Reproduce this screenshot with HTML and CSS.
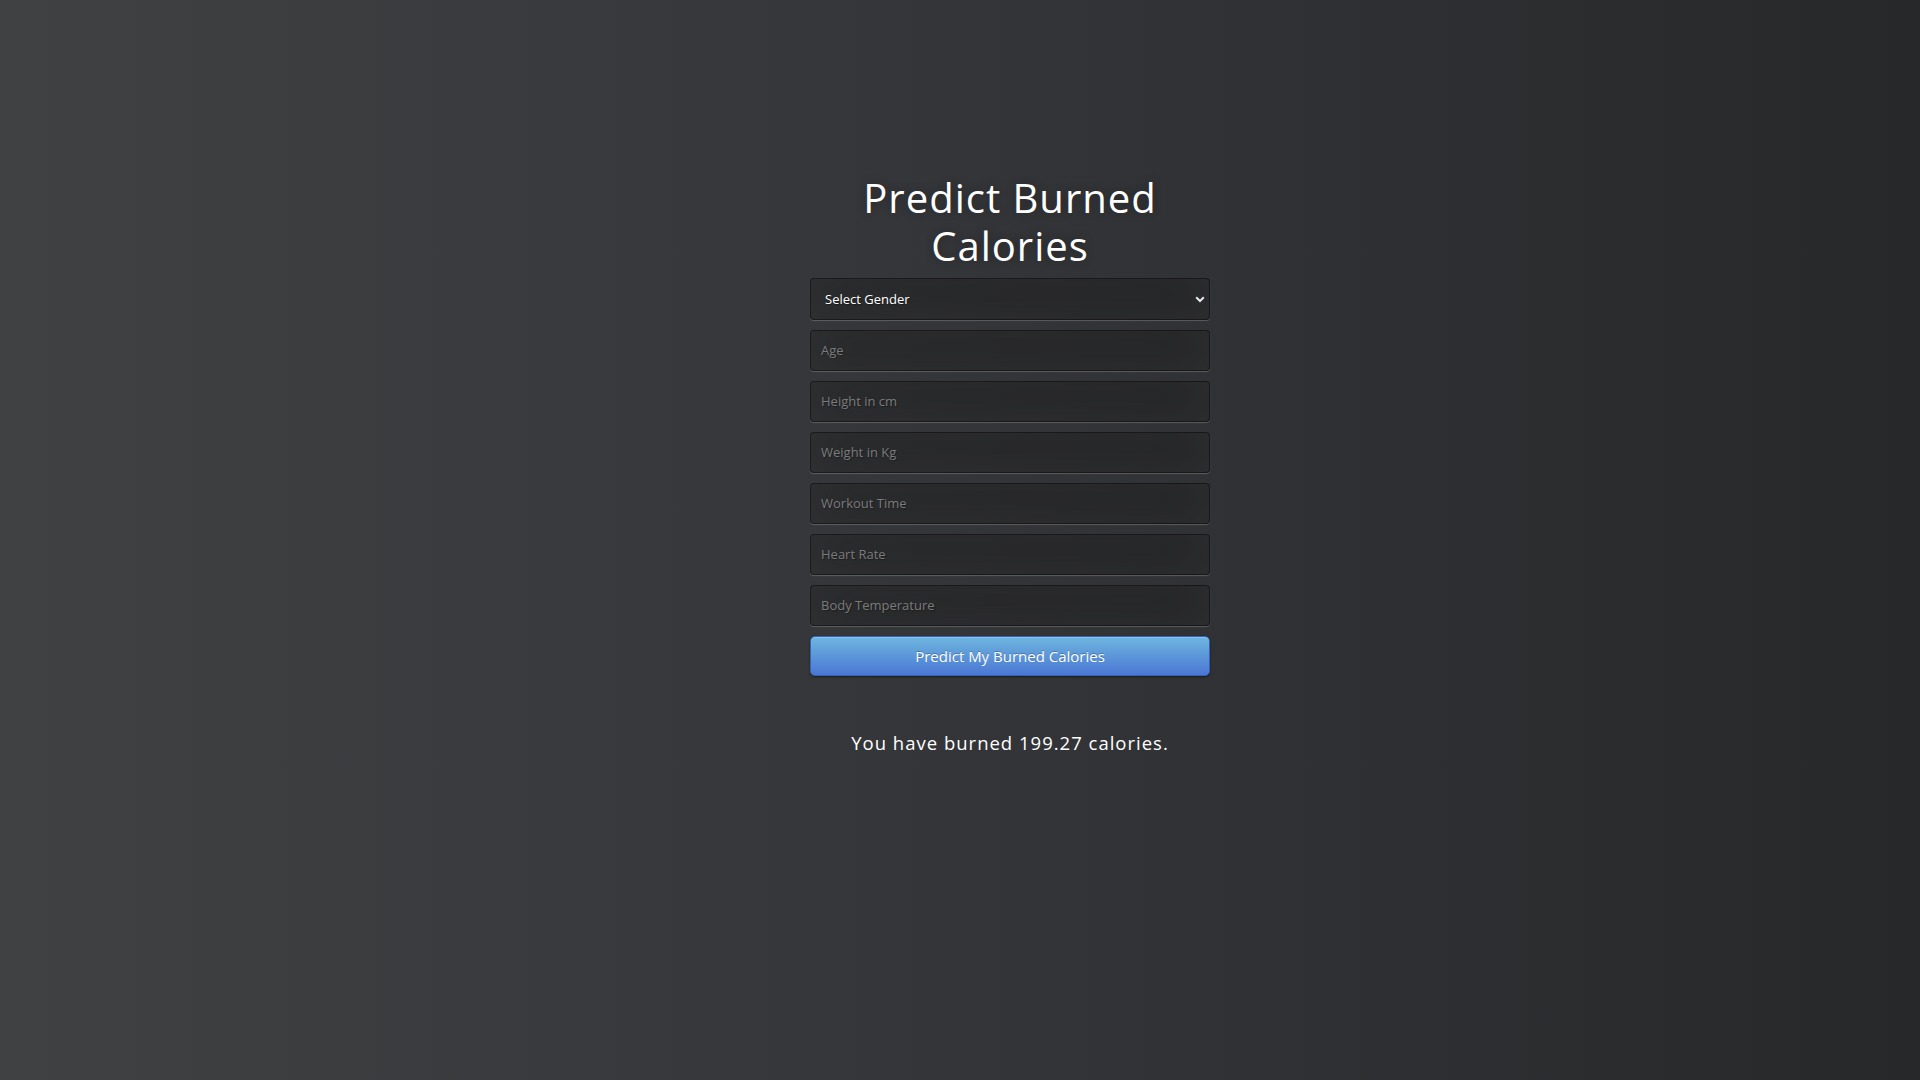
FILE: index.html
```html
<!DOCTYPE html>
<html lang="en">
<head>
<meta charset="utf-8">
<title>Predict Burned Calories</title>
<link rel="stylesheet" href="styles.css">
</head>
<body>
<div class="login">
  <h1 class="title">Predict Burned Calories</h1>
  <form class="form">
    <div class="select-wrap">
      <select class="field select">
        <option>Select Gender</option>
        <option>Male</option>
        <option>Female</option>
      </select>
      <svg class="chevron" width="10" height="7" viewBox="0 0 10 7"><path d="M1.2 1.3 L5 5 L8.8 1.3" fill="none" stroke="#e8e8e8" stroke-width="2"/></svg>
    </div>
    <input class="field" type="text" placeholder="Age">
    <input class="field" type="text" placeholder="Height in cm">
    <input class="field" type="text" placeholder="Weight in Kg">
    <input class="field" type="text" placeholder="Workout Time">
    <input class="field" type="text" placeholder="Heart Rate">
    <input class="field" type="text" placeholder="Body Temperature">
    <button class="btn" type="button">Predict My Burned Calories</button>
  </form>
  <p class="result">You have burned 199.27 calories.</p>
</div>
</body>
</html>
```
FILE: styles.css
```css
html, body {
  margin: 0;
  height: 100%;
}
body {
  font-family: "Open Sans", "Noto Sans", sans-serif;
  background: linear-gradient(to right, #404143 0%, #343538 50%, #27282a 100%);
  min-height: 1080px;
  box-sizing: border-box;
  padding-top: 174px;
}
.login {
  width: 400px;
  margin-left: calc(50% - 150px);
}
.title {
  margin: 0 0 8px;
  color: #fff;
  font-size: 40px;
  font-weight: 400;
  line-height: 48px;
  letter-spacing: 1px;
  text-align: center;
  text-shadow: 0 0 10px rgba(0,0,0,0.3);
}
.form {
  display: flex;
  flex-direction: column;
  gap: 10px;
  margin: 0;
}
.field {
  box-sizing: border-box;
  width: 100%;
  height: 41px;
  margin: 0;
  padding: 0 10px 1px;
  font-family: "Open Sans", sans-serif;
  font-size: 13px;
  color: #fff;
  background: rgba(0,0,0,0.3);
  border: 1px solid rgba(0,0,0,0.3);
  border-radius: 4px;
  outline: none;
  box-shadow: inset 0 -5px 45px rgba(100,100,100,0.2), 0 1px 1px rgba(255,255,255,0.2);
  text-shadow: 1px 1px 1px rgba(0,0,0,0.3);
}
.field::placeholder {
  color: #7a7b7d;
}
.select-wrap {
  position: relative;
}
.select {
  height: 42px;
  padding-left: 14px;
  appearance: none;
  -webkit-appearance: none;
  color: #fff;
}
.chevron {
  position: absolute;
  right: 5px;
  top: 18px;
}
.btn {
  box-sizing: border-box;
  width: 100%;
  height: 40px;
  margin: 0;
  padding: 0 14px;
  font-family: "Open Sans", sans-serif;
  font-size: 15px;
  color: #fff;
  text-shadow: 0 -1px 0 rgba(0,0,0,0.25);
  background: linear-gradient(to bottom, #6eb6de, #4a77d4);
  border: 1px solid #3762bc;
  border-radius: 5px;
  box-shadow: inset 0 1px 0 rgba(255,255,255,0.2), 0 1px 2px rgba(0,0,0,0.5);
  cursor: pointer;
}
.result {
  margin: 54px 0 0;
  color: #fff;
  font-size: 18.5px;
  line-height: 26px;
  letter-spacing: 1px;
  text-align: center;
}
```
